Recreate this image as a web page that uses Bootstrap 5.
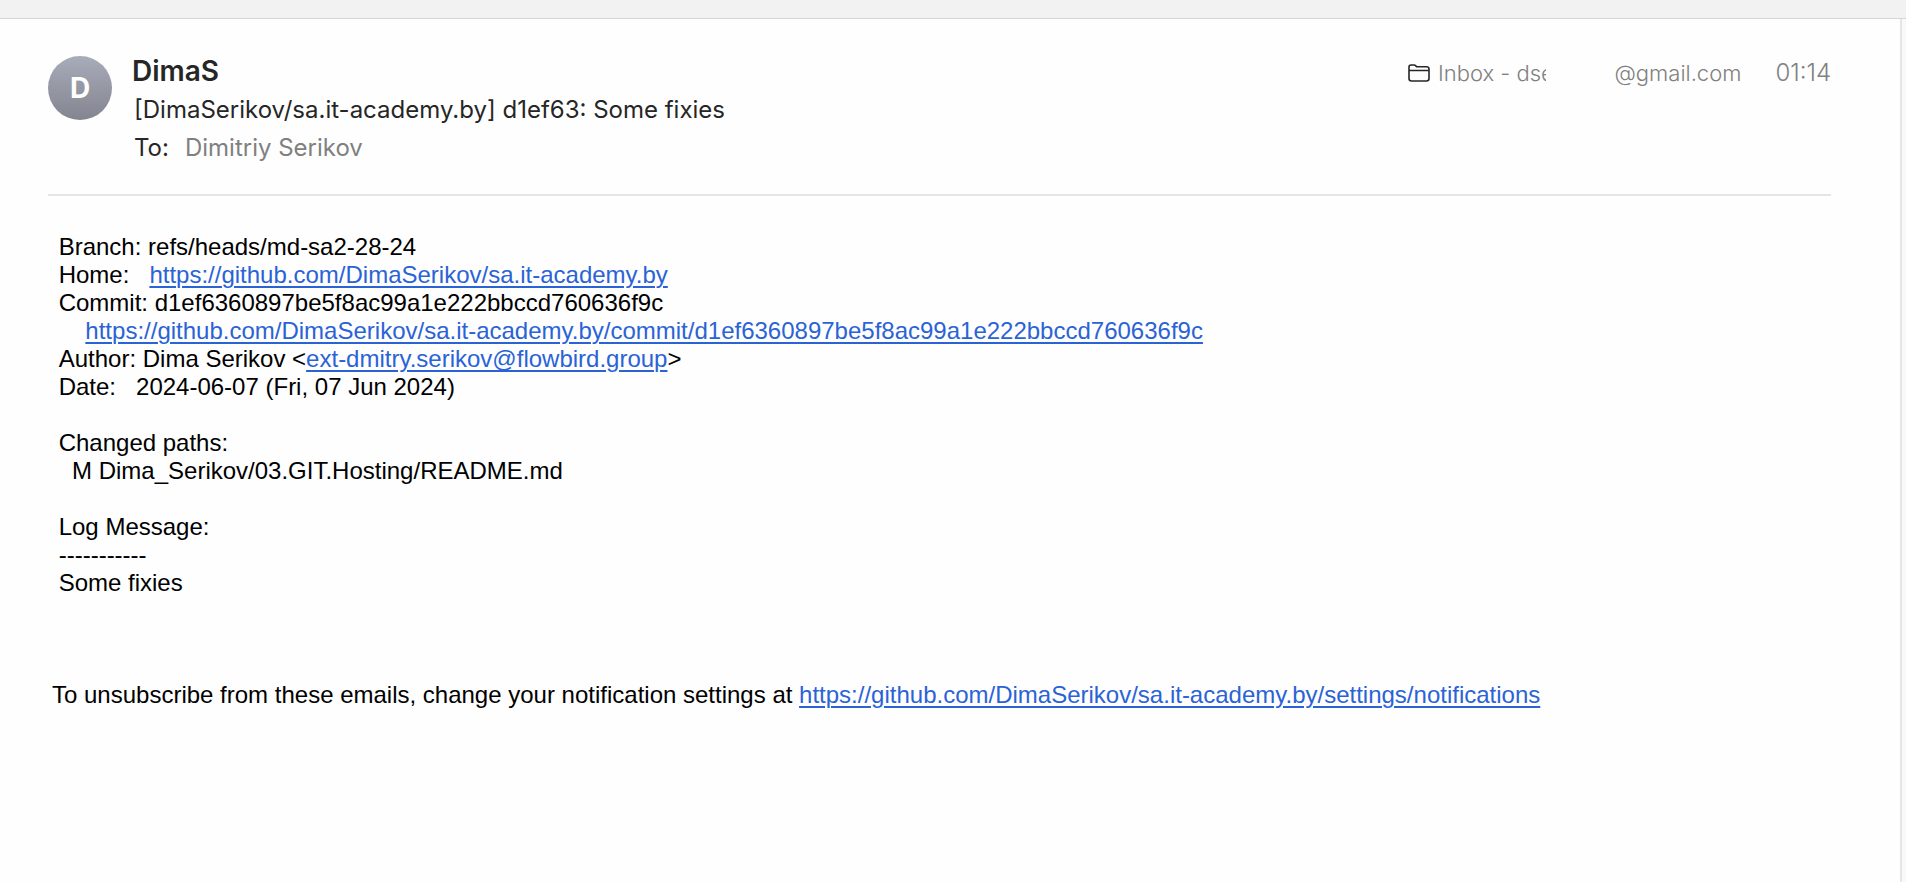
<!DOCTYPE html>
<html lang="en">
<head>
<meta charset="utf-8">
<meta name="viewport" content="width=device-width, initial-scale=1">
<title>Some fixies</title>
<link href="https://cdn.jsdelivr.net/npm/bootstrap@5.3.0/dist/css/bootstrap.min.css" rel="stylesheet">
<style>
  body { background: #fefefe; color: #262626; font-family: Inter, sans-serif; font-size: 24px; line-height: 38px; }
  .toolbar-edge { height: 19px; background: #f2f2f2; border-bottom: 1px solid #d5d5d5; }
  .mail-pane { padding: 33px 69px 32px 48px; border-right: 2px solid #e5e5e5; }
  .side-strip { width: 4px; background: #f9f9f9; }
  .mail-head { padding: 0 0 27px; border-bottom: 2px solid #e5e5e5; }
  .avatar { width: 64px; height: 64px; margin-top: 4px; background: linear-gradient(#a8acb9, #83858f); color: #fff; font-weight: 700; font-size: 28px; }
  .sender-block { margin-left: 20px; }
  .sender { font-size: 28px; font-weight: 600; line-height: 39px; margin: 0; }
  .detail { padding-left: 2px; }
  .soft { color: #808080; }
  .meta { color: #808080; font-weight: 300; gap: 34px; padding-top: 2px; }
  .mailbox { font-size: 22px; }
  .account { width: 30px; overflow: hidden; white-space: nowrap; }
  .hidden-part { width: 68px; }
  .message { font-family: "Liberation Sans", Arial, sans-serif; line-height: 28px; color: #000; padding: 37px 4px 0; white-space: pre-wrap; overflow-wrap: anywhere; }
  .message a { color: #2a63d6; text-decoration-thickness: 2px; text-underline-offset: 3px; }
</style>
</head>
<body class="d-flex flex-column min-vh-100">
<div class="toolbar-edge"></div>
<div class="d-flex flex-grow-1">
  <main class="mail-pane flex-grow-1">
    <header class="mail-head d-flex justify-content-between align-items-start">
      <div class="d-flex">
        <div class="avatar rounded-circle d-flex align-items-center justify-content-center flex-shrink-0">D</div>
        <div class="sender-block">
          <h1 class="sender">DimaS</h1>
          <div class="detail">[DimaSerikov/sa.it-academy.by] d1ef63: Some fixies</div>
          <div class="detail d-flex gap-3"><span>To:</span><span class="soft">Dimitriy Serikov</span></div>
        </div>
      </div>
      <div class="meta d-flex">
        <div class="mailbox d-flex align-items-center">
          <svg class="me-2" width="22" height="18" viewBox="0 0 22 18" fill="none" stroke="#262626" stroke-width="1.6" aria-hidden="true"><path d="M1 14.500V3Q1 1 3 1H6Q7 1 7.800 1.900L8.600 2.800H18.500Q21 2.800 21 5V14.500Q21 17 18.500 17H3.500Q1 17 1 14.500ZM1 6.500H21"/></svg>
          <span>Inbox -&nbsp;</span><span class="account">dse</span><span class="hidden-part"></span><span>@gmail.com</span>
        </div>
        <time>01:14</time>
      </div>
    </header>
    <article class="message"> Branch: refs/heads/md-sa2-28-24
 Home:   <a href="https://github.com/DimaSerikov/sa.it-academy.by">https://github.com/DimaSerikov/sa.it-academy.by</a>
 Commit: d1ef6360897be5f8ac99a1e222bbccd760636f9c
     <a href="https://github.com/DimaSerikov/sa.it-academy.by/commit/d1ef6360897be5f8ac99a1e222bbccd760636f9c">https://github.com/DimaSerikov/sa.it-academy.by/commit/d1ef6360897be5f8ac99a1e222bbccd760636f9c</a>
 Author: Dima Serikov &lt;<a href="mailto:ext-dmitry.serikov@flowbird.group">ext-dmitry.serikov@flowbird.group</a>&gt;
 Date:   2024-06-07 (Fri, 07 Jun 2024)

 Changed paths:
   M Dima_Serikov/03.GIT.Hosting/README.md

 Log Message:
 -----------
 Some fixies



To unsubscribe from these emails, change your notification settings at <a href="https://github.com/DimaSerikov/sa.it-academy.by/settings/notifications">https://github.com/DimaSerikov/sa.it-academy.by/settings/notifications</a></article>
  </main>
  <aside class="side-strip"></aside>
</div>
<script src="https://cdn.jsdelivr.net/npm/bootstrap@5.3.0/dist/js/bootstrap.bundle.min.js"></script>
</body>
</html>
